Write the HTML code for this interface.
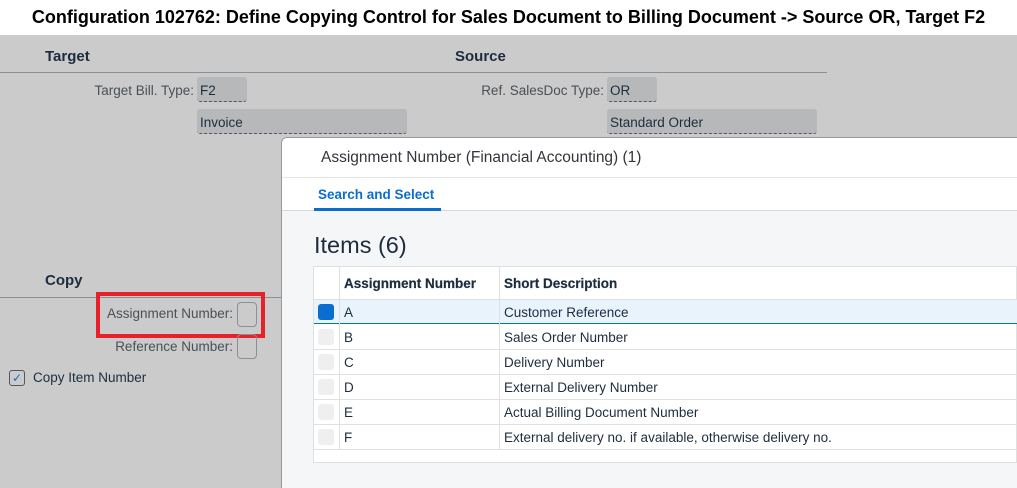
<!DOCTYPE html>
<html><head><style>
*{margin:0;padding:0;box-sizing:border-box}
body{width:1017px;height:488px;overflow:hidden;font-family:"Liberation Sans",sans-serif;background:#cbcbcb;position:relative;color:#32363a}
.a{position:absolute}
.t{top:0;left:0;width:1017px;height:35px;background:#fff;text-align:center;font-weight:bold;font-size:18px;line-height:34px;color:#000}
.h{font-weight:bold;font-size:15px;color:#1d2d3e}
.l{font-size:13.5px;color:#4a5055;text-align:right}
.f{background:#b7b8ba;border-radius:3px;border-bottom:1px dashed #556;font-size:13.5px;padding-left:3px;padding-top:2px;line-height:24px;height:25px;color:#1d2d3e}
.cell{position:absolute;font-size:13.5px;color:#1d2d3e}
</style></head><body>
<div class="a t">Configuration 102762: Define Copying Control for Sales Document to Billing Document -&gt; Source OR, Target F2</div>
<div class="a h" style="left:45px;top:48px">Target</div>
<div class="a h" style="left:455px;top:48px">Source</div>
<div class="a" style="left:0;top:72px;width:827px;height:1px;background:#8a9097"></div>
<div class="a l" style="left:0;top:83px;width:194px">Target Bill. Type:</div>
<div class="a f" style="left:197px;top:77px;width:50px">F2</div>
<div class="a f" style="left:197px;top:109px;width:210px">Invoice</div>
<div class="a l" style="left:400px;top:83px;width:204px">Ref. SalesDoc Type:</div>
<div class="a f" style="left:607px;top:77px;width:50px">OR</div>
<div class="a f" style="left:607px;top:109px;width:210px">Standard Order</div>
<div class="a h" style="left:45px;top:272px">Copy</div>
<div class="a" style="left:0;top:297px;width:281px;height:1px;background:#8a9097"></div>
<div class="a" style="left:96px;top:292px;width:169px;height:46px;border:4px solid #e8202a"></div>
<div class="a l" style="left:0;top:306px;width:233px">Assignment Number:</div>
<div class="a" style="left:237px;top:302px;width:20px;height:25px;border:1px solid #8a9097;border-radius:4px"></div>
<div class="a l" style="left:0;top:339px;width:233px">Reference Number:</div>
<div class="a" style="left:237px;top:334px;width:20px;height:25px;border:1px solid #8a9097;border-radius:4px"></div>
<div class="a" style="left:9px;top:370px;width:16px;height:16px;border:1px solid #556;border-radius:3px;font-size:12px;line-height:14px;text-align:center;color:#0a6ed1">✓</div>
<div class="a" style="left:33px;top:370px;font-size:13.5px;color:#1d2d3e">Copy Item Number</div>
<div class="a" style="left:281px;top:137px;width:736px;height:351px;background:#f5f6f7;border-left:1px solid #999;border-top:1px solid #999;border-top-left-radius:6px;overflow:hidden">
<div class="a" style="left:0;top:0;width:736px;height:40px;background:#fff;border-bottom:1px solid #e5e5e5"></div>
<div class="a" style="left:39px;top:11px;font-size:15.5px;color:#32363a">Assignment Number (Financial Accounting) (1)</div>
<div class="a" style="left:0;top:40px;width:736px;height:33px;background:#fff;border-bottom:1px solid #d9d9d9"></div>
<div class="a" style="left:36px;top:49px;font-size:13.5px;font-weight:bold;color:#0a6ed1">Search and Select</div>
<div class="a" style="left:32px;top:70px;width:127px;height:3px;background:#0a6ed1"></div>
<div class="a" style="left:32px;top:94px;font-size:23.5px;color:#1d2d3e">Items (6)</div>
</div>
<div class="a" style="left:313px;top:266px;width:704px;height:197px;background:#fff;border:1px solid #e0e0e0"></div>
<div class="a" style="left:314px;top:299px;width:703px;height:25px;background:#e8f3fb;border-bottom:1px solid #0a6ed1"></div>
<div class="a" style="left:314px;top:299px;width:703px;height:1px;background:#e0e0e0"></div>
<div class="a" style="left:339px;top:266px;width:1px;height:184px;background:#e0e0e0"></div>
<div class="a" style="left:499px;top:266px;width:1px;height:184px;background:#e0e0e0"></div>
<div class="cell" style="left:344px;top:276px;font-weight:600;-webkit-text-stroke:0.2px #1d2d3e">Assignment Number</div>
<div class="cell" style="left:504px;top:276px;font-weight:600;-webkit-text-stroke:0.2px #1d2d3e">Short Description</div>
<div class="a" style="left:318px;top:304px;width:16px;height:16px;background:#0a6ed1;border-radius:3px"></div>
<div class="cell" style="left:344px;top:305px">A</div><div class="cell" style="left:504px;top:305px">Customer Reference</div>
<div class="a" style="left:314px;top:349px;width:703px;height:1px;background:#e0e0e0"></div>
<div class="a" style="left:314px;top:374px;width:703px;height:1px;background:#e0e0e0"></div>
<div class="a" style="left:314px;top:399px;width:703px;height:1px;background:#e0e0e0"></div>
<div class="a" style="left:314px;top:424px;width:703px;height:1px;background:#e0e0e0"></div>
<div class="a" style="left:314px;top:449px;width:703px;height:1px;background:#e0e0e0"></div>
<div class="a" style="left:318px;top:329px;width:16px;height:16px;background:#efefef;border-radius:3px"></div>
<div class="a" style="left:318px;top:354px;width:16px;height:16px;background:#efefef;border-radius:3px"></div>
<div class="a" style="left:318px;top:379px;width:16px;height:16px;background:#efefef;border-radius:3px"></div>
<div class="a" style="left:318px;top:404px;width:16px;height:16px;background:#efefef;border-radius:3px"></div>
<div class="a" style="left:318px;top:429px;width:16px;height:16px;background:#efefef;border-radius:3px"></div>
<div class="cell" style="left:344px;top:330px">B</div><div class="cell" style="left:504px;top:330px">Sales Order Number</div>
<div class="cell" style="left:344px;top:355px">C</div><div class="cell" style="left:504px;top:355px">Delivery Number</div>
<div class="cell" style="left:344px;top:380px">D</div><div class="cell" style="left:504px;top:380px">External Delivery Number</div>
<div class="cell" style="left:344px;top:405px">E</div><div class="cell" style="left:504px;top:405px">Actual Billing Document Number</div>
<div class="cell" style="left:344px;top:430px">F</div><div class="cell" style="left:504px;top:430px">External delivery no. if available, otherwise delivery no.</div>
</body></html>
